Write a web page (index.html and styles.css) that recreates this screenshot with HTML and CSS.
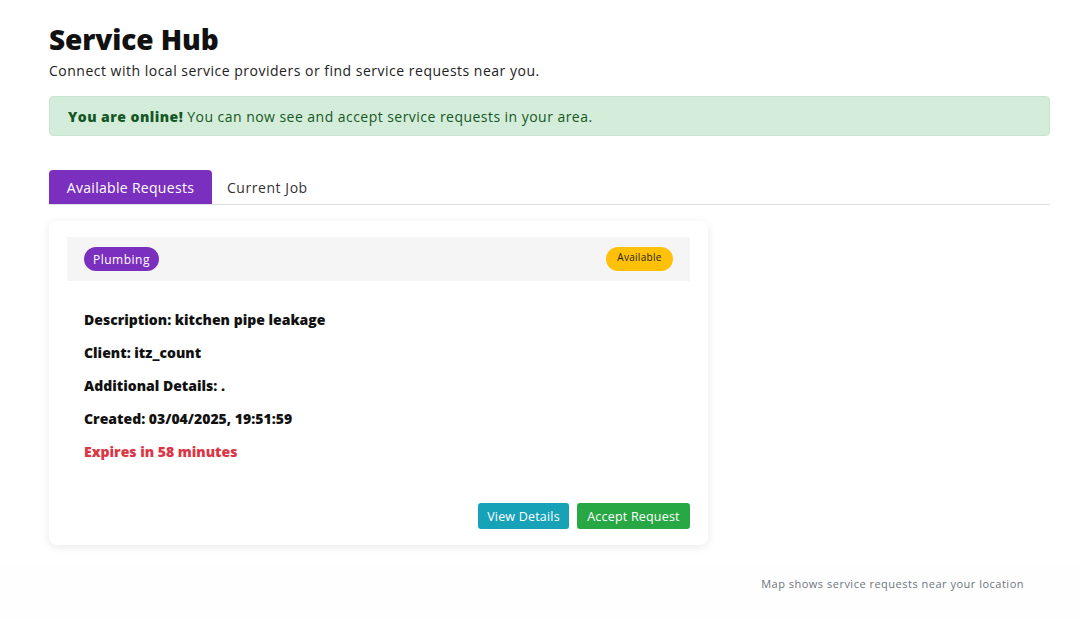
FILE: index.html
```html
<!DOCTYPE html>
<html lang="en">
<head>
<meta charset="utf-8">
<title>Service Hub</title>
<link rel="stylesheet" href="styles.css">
</head>
<body>
<main class="page">
  <h1 class="title">Service Hub</h1>
  <p class="subtitle">Connect with local service providers or find service requests near you.</p>
  <div class="alert"><strong>You are online!</strong> You can now see and accept service requests in your area.</div>
  <nav class="tabs">
    <button class="tab active">Available Requests</button>
    <button class="tab">Current Job</button>
  </nav>
  <section class="card">
    <div class="card-head">
      <span class="badge badge-purple">Plumbing</span>
      <span class="badge badge-yellow">Available</span>
    </div>
    <div class="card-body">
      <p>Description: kitchen pipe leakage</p>
      <p>Client: itz_count</p>
      <p>Additional Details: .</p>
      <p>Created: 03/04/2025, 19:51:59</p>
      <p class="expire">Expires in 58 minutes</p>
    </div>
    <div class="card-actions">
      <button class="btn btn-info">View Details</button>
      <button class="btn btn-success">Accept Request</button>
    </div>
  </section>
</main>
<footer class="footer">Map shows service requests near your location</footer>
</body>
</html>
```

FILE: styles.css
```css
* { box-sizing: border-box; }
html, body { margin: 0; padding: 0; background: #ffffff; }
body {
  font-family: "Open Sans", "Noto Sans", sans-serif;
  color: #212529;
  height: 619px;
  display: flex;
  flex-direction: column;
}
.page {
  padding: 21px 30px 0 49px;
  flex: 1;
}
.title {
  margin: 0;
  font-size: 28px;
  line-height: 36px;
  font-weight: 800;
  color: #111;
  letter-spacing: -0.1px;
}
.subtitle {
  margin: 4px 0 0;
  font-size: 14px;
  line-height: 20px;
  color: #222;
  letter-spacing: 0.5px;
}
.alert {
  margin-top: 15px;
  height: 40px;
  display: flex;
  align-items: center;
  padding: 0 18px;
  background: #d4edda;
  border: 1px solid #c8e6cf;
  border-radius: 4px;
  color: #155724;
  font-size: 14px;
  letter-spacing: 0.46px;
  white-space: pre;
}
.alert strong { font-weight: 800; }
.tabs {
  margin-top: 34px;
  display: flex;
  border-bottom: 1px solid #dee2e6;
}
.tab {
  font-family: inherit;
  height: 34px;
  padding: 0 15px;
  border: 0;
  background: transparent;
  font-size: 14px;
  color: #333;
  border-radius: 4px 4px 0 0;
  letter-spacing: 0.55px;
  cursor: pointer;
}
.tab.active {
  background: #7b2fbe;
  color: #fff;
  width: 163px;
  letter-spacing: 0.3px;
}
.card {
  margin-top: 16px;
  width: 659px;
  background: #fff;
  border-radius: 8px;
  box-shadow: 0 2px 10px rgba(0, 0, 0, 0.09);
  padding: 16px 18px 16px 18px;
}
.card-head {
  height: 44px;
  background: #f5f5f5;
  display: flex;
  align-items: center;
  justify-content: space-between;
  padding: 0 17px;
}
.badge {
  height: 24px;
  border-radius: 12px;
  font-size: 12px;
  padding: 0 9px;
  display: inline-flex;
  align-items: center;
  letter-spacing: 0.5px;
}
.badge-purple { background: #7b2fbe; color: #fff; }
.badge-yellow {
  background: #ffc107;
  color: #222;
  font-size: 10px;
  align-items: flex-start;
  padding-top: 3px;
  width: 67px;
  justify-content: center;
  letter-spacing: 0.3px;
}
.card-body {
  padding: 22px 17px 0;
}
.card-body p {
  margin: 0;
  font-size: 14px;
  line-height: 33px;
  font-weight: 800;
  color: #111;
  letter-spacing: 0;
}
.card-body .expire { color: #dc3545; }
.card-actions {
  margin-top: 35px;
  display: flex;
  justify-content: flex-end;
  gap: 8px;
}
.btn {
  font-family: inherit;
  height: 26px;
  border: 0;
  border-radius: 3px;
  color: #fff;
  font-size: 12.5px;
  padding: 0 9px;
  letter-spacing: 0.2px;
}
.btn-info { background: #17a2b8; width: 91px; }
.btn-success { background: #28a745; width: 113px; }
.footer {
  height: 56px;
  background: #fefefe;
  text-align: right;
  padding: 13px 56px 0 0;
  font-size: 11px;
  color: #6c757d;
  letter-spacing: 0.5px;
}
```
